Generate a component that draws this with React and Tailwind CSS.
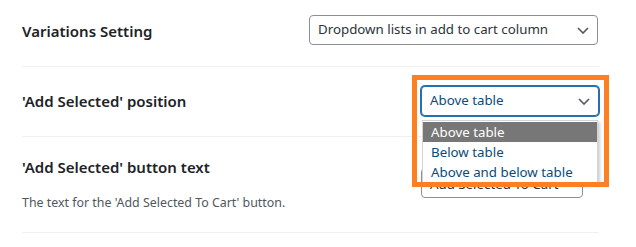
function Chevron() {
  return (
    <svg width="12" height="7" viewBox="0 0 12 7" className="shrink-0">
      <path d="M1 1l5 5 5-5" fill="none" stroke="#50575e" strokeWidth="1.6" />
    </svg>
  );
}

function Select({ value, focused, className }) {
  return (
    <div
      className={`flex h-[30px] items-center justify-between rounded-[4px] border bg-white pl-[8px] pr-[8px] text-[13.3px] ${
        focused
          ? "border-[#2271b1] text-[#0a4b78] shadow-[0_0_0_1px_#2271b1]"
          : "border-[#8c8f94] text-[#2c3338]"
      } ${className}`}
    >
      <span>{value}</span>
      <Chevron />
    </div>
  );
}

export default function App() {
  const options = ["Above table", "Below table", "Above and below table"];

  return (
    <div
      className="relative h-[247px] w-[636px] overflow-hidden bg-white"
      style={{ fontFamily: '"Noto Sans", "Open Sans", sans-serif' }}
    >
      <div className="ml-[22px] w-[577px]">
        {/* variations */}
        <div className="flex h-[67px] items-start border-b border-[#f0f0f0] pt-[15px]">
          <div className="w-[287px] text-[15px] font-semibold leading-[32px] text-[#1d2327]">
            Variations Setting
          </div>
          <Select value="Dropdown lists in add to cart column" className="w-[289px]" />
        </div>

        {/* add selected position */}
        <div className="flex h-[70px] items-start border-b border-[#f0f0f0] pt-[19px]">
          <div className="w-[399px] text-[15px] font-semibold leading-[30px] text-[#1d2327]">
            'Add Selected' position
          </div>
          <Select value="Above table" focused className="w-[178px]" />
        </div>

        {/* button text */}
        <div className="flex h-[96px] items-start border-b border-[#f0f0f0] pt-[15px]">
          <div className="w-[399px]">
            <div className="text-[15px] font-semibold leading-[30px] text-[#1d2327]">
              'Add Selected' button text
            </div>
            <p className="mt-[12px] text-[12.4px] leading-[18px] text-[#50575e]">
              The text for the 'Add Selected To Cart' button.
            </p>
          </div>
          <div className="mt-[16px] flex h-[30px] w-[162px] items-center rounded-[4px] border border-[#8c8f94] px-[8px] pt-[3px] text-[13.3px] text-[#2c3338]">
            Add Selected To Cart
          </div>
        </div>
      </div>

      {/* open dropdown list */}
      <div className="absolute left-[422px] top-[120px] w-[176px] border border-[#d4d4d4] bg-white py-[1px] text-[13.3px] leading-[20px] text-[#0a4b78] shadow-[2px_2px_3px_rgba(0,0,0,0.2)]">
        {options.map((o, i) => (
          <div key={o} className={`px-[8px] ${i === 0 ? "bg-[#777777] text-white" : ""}`}>
            {o}
          </div>
        ))}
      </div>

      {/* annotation frame */}
      <div className="pointer-events-none absolute left-[412px] top-[75px] h-[112px] w-[197px] border-[5px] border-[#fd7f23]" />
    </div>
  );
}
